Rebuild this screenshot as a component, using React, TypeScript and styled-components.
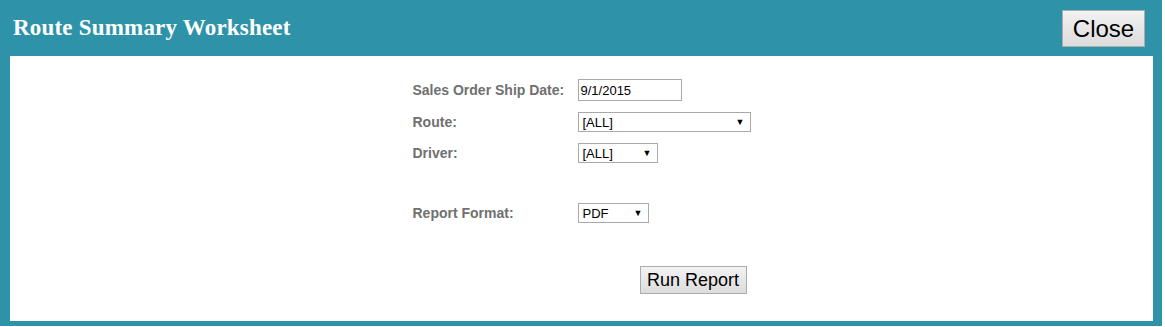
import { createGlobalStyle, styled } from 'styled-components';

const GlobalStyle = createGlobalStyle`
  body {
    margin: 0;
    background: #fff;
    font-family: 'Liberation Sans', Arial, sans-serif;
  }
`;

const Dialog = styled.div`
  width: 1162px;
  height: 326px;
  box-sizing: border-box;
  background-color: #2e93a8;
  padding: 0 9px 5px 10px;
  display: flex;
  flex-direction: column;
`;

const Header = styled.div`
  height: 56px;
  display: flex;
  align-items: center;
  justify-content: space-between;
  padding: 0 8px 0 3px;
`;

const Title = styled.h1`
  margin: 0;
  font-family: 'Liberation Serif', 'Times New Roman', serif;
  font-weight: bold;
  font-size: 23px;
  letter-spacing: 0.2px;
  color: #fff;
`;

const Button = styled.button<{ $size: number }>`
  font-family: 'Liberation Sans', Arial, sans-serif;
  font-size: ${(p) => p.$size}px;
  color: #000;
  background: linear-gradient(#f2f2f2, #dcdcdc);
  border: 1px solid #acacac;
  border-radius: 0;
  padding: 0;
  white-space: nowrap;
  cursor: pointer;
`;

const CloseButton = styled(Button)`
  width: 83px;
  height: 37px;
  margin-top: 1px;
`;

const Panel = styled.div`
  flex: 1;
  background: #fff;
  display: flex;
  justify-content: center;
  padding-top: 23px;
`;

const Form = styled.div`
  width: 338px;
  display: flex;
  flex-direction: column;
`;

const Row = styled.div<{ $top: number }>`
  display: flex;
  align-items: center;
  margin-top: ${(p) => p.$top}px;
`;

const Label = styled.label`
  width: 165px;
  font-size: 14px;
  font-weight: bold;
  color: #707070;
`;

const TextBox = styled.div`
  width: 104px;
  height: 22px;
  box-sizing: border-box;
  border: 1px solid #a9a9a9;
  font-size: 13px;
  padding: 0 2px;
  display: flex;
  align-items: center;
`;

const Select = styled.div<{ $width: number }>`
  width: ${(p) => p.$width}px;
  height: 20px;
  box-sizing: border-box;
  border: 1px solid #a9a9a9;
  font-size: 13px;
  padding: 0 5px 0 4px;
  display: flex;
  align-items: center;
  justify-content: space-between;
`;

const Arrow = styled.span`
  font-size: 9px;
`;

const Actions = styled.div`
  margin-top: 43px;
  padding-left: 227px;
`;

const RunButton = styled(Button)`
  width: 107px;
  height: 28px;
`;

export default function App() {
  return (
    <>
      <GlobalStyle />
      <Dialog>
        <Header>
          <Title>Route Summary Worksheet</Title>
          <CloseButton $size={24}>Close</CloseButton>
        </Header>
        <Panel>
          <Form>
            <Row $top={0}>
              <Label>Sales Order Ship Date:</Label>
              <TextBox>9/1/2015</TextBox>
            </Row>
            <Row $top={11}>
              <Label>Route:</Label>
              <Select $width={173}>
                [ALL]<Arrow>▼</Arrow>
              </Select>
            </Row>
            <Row $top={11}>
              <Label>Driver:</Label>
              <Select $width={80}>
                [ALL]<Arrow>▼</Arrow>
              </Select>
            </Row>
            <Row $top={40}>
              <Label>Report Format:</Label>
              <Select $width={71}>
                PDF<Arrow>▼</Arrow>
              </Select>
            </Row>
            <Actions>
              <RunButton $size={18}>Run Report</RunButton>
            </Actions>
          </Form>
        </Panel>
      </Dialog>
    </>
  );
}
